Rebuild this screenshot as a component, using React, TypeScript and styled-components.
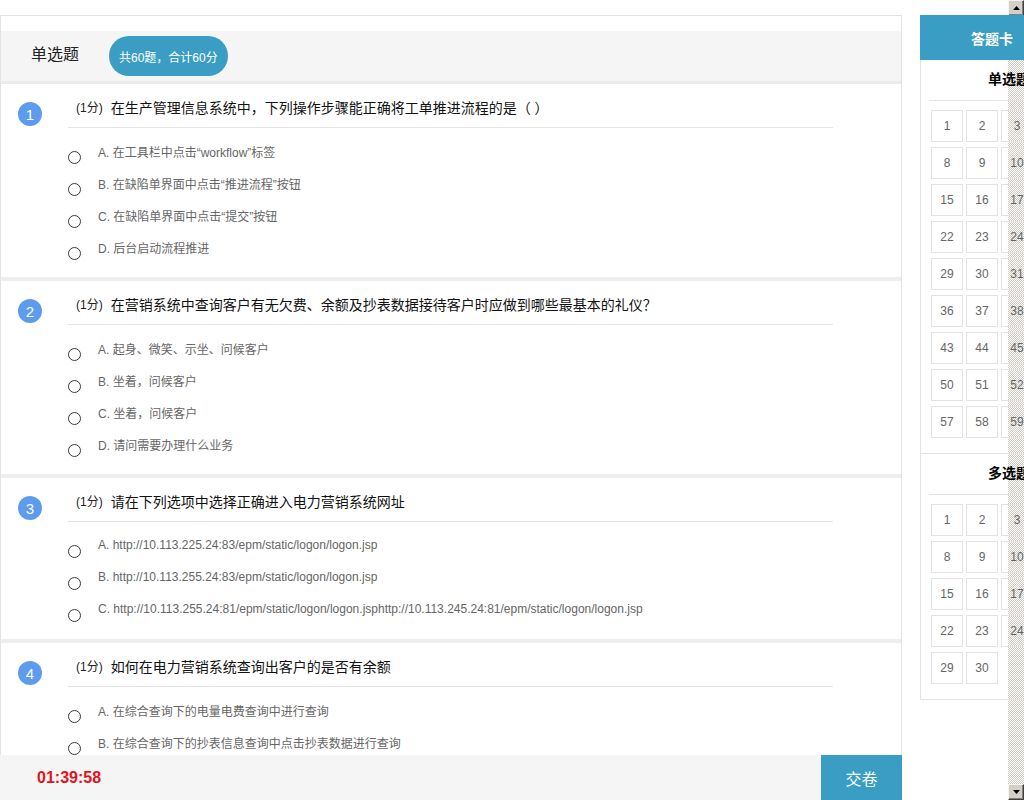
import React from "react";
import styled, { createGlobalStyle } from "styled-components";

const Global = createGlobalStyle`
  html, body { margin: 0; padding: 0; background: #fff; }
  body { font-family: "Liberation Sans", "Noto Sans CJK SC", sans-serif; }
  * { box-sizing: border-box; }
`;

const Screen = styled.div`
  width: 1024px;
  height: 800px;
  overflow: hidden;
  display: flex;
  background: #fff;
`;

const Viewport = styled.div`
  position: relative;
  width: 1008px;
  height: 800px;
  flex: none;
`;

const Page = styled.div`
  display: flex;
  align-items: flex-start;
  padding-top: 15px;
  gap: 18px;
  width: 1300px;
`;

const ExamPanel = styled.div`
  width: 902px;
  flex: none;
  border: 1px solid #e3e3e3;
  border-bottom: none;
  padding-top: 15px;
`;

const SectionHeader = styled.div`
  height: 53px;
  background: #f5f5f5;
  border-bottom: 3px solid #ebebeb;
  display: flex;
  align-items: center;
  padding-left: 30px;
  gap: 30px;
`;

const SectionName = styled.span`
  font-size: 16px;
  color: #222;
  margin-top: -6px;
`;

const Pill = styled.span`
  height: 40px;
  padding: 0 10px;
  border-radius: 20px;
  background: #3a9ec4;
  color: #fff;
  font-size: 12px;
  display: flex;
  align-items: center;
`;

const Question = styled.div`
  display: flex;
  padding: 0 0 14px 17px;
  border-bottom: 4px solid #eeeeee;
`;

const NumBadge = styled.div`
  width: 24px;
  height: 24px;
  margin-top: 18px;
  border-radius: 50%;
  background: #5d9cec;
  color: #fff;
  font-size: 15px;
  display: flex;
  align-items: center;
  justify-content: center;
  flex: none;
`;

const Body = styled.div`
  margin-left: 26px;
  width: 765px;
`;

const Title = styled.div`
  padding: 14px 0 9px 8px;
  border-bottom: 1px solid #e5e5e5;
  font-size: 14px;
  line-height: 20px;
  color: #111;
  display: flex;
  align-items: center;
  gap: 8px;
`;

const Score = styled.span`
  font-size: 12px;
  color: #222;
`;

const Options = styled.div`
  margin-top: 7px;
`;

const Option = styled.label`
  height: 32px;
  display: flex;
  align-items: center;
  font-size: 12px;
  color: #666;
`;

const Radio = styled.input.attrs({ type: "radio" })`
  appearance: none;
  width: 13px;
  height: 13px;
  margin: 13px 17px 0 0;
  border: 1px solid #3a3a3a;
  border-radius: 50%;
  background: #fff;
  flex: none;
`;

const CardPanel = styled.div`
  position: relative;
  z-index: 2;
  width: 265px;
  flex: none;
  border: 1px solid #e3e3e3;
`;

const CardHeader = styled.div`
  height: 45px;
  margin: -1px -1px 0 -1px;
  background: #3a9ec4;
  color: #fff;
  font-size: 14px;
  font-weight: bold;
  display: flex;
  align-items: center;
  padding-left: 51px;
`;

const CardSection = styled.div<{ $last?: boolean }>`
  padding-bottom: 15px;
  border-bottom: ${(p) => (p.$last ? "none" : "1px solid #e3e3e3")};
`;

const CardTitle = styled.div`
  height: 41px;
  margin: 0 8px;
  border-bottom: 1px solid #e3e3e3;
  display: flex;
  align-items: center;
  padding: 0 0 4px 59px;
  font-size: 14px;
  font-weight: bold;
  color: #000;
`;

const Grid = styled.div`
  display: grid;
  grid-template-columns: repeat(7, 32px);
  column-gap: 3px;
  row-gap: 5px;
  padding: 9px 0 0 10px;
`;

const Cell = styled.div`
  width: 32px;
  height: 32px;
  border: 1px solid #e3e3e3;
  display: flex;
  align-items: center;
  justify-content: center;
  font-size: 12px;
  color: #666;
`;

const BottomBar = styled.div`
  position: absolute;
  left: 0;
  bottom: 0;
  width: 902px;
  height: 45px;
  background: #f5f5f5;
  display: flex;
  align-items: center;
  justify-content: space-between;
`;

const Timer = styled.span`
  margin-left: 37px;
  color: #e0141e;
  font-size: 16px;
  font-weight: bold;
`;

const Submit = styled.button`
  width: 81px;
  height: 45px;
  border: none;
  background: #3a9ec4;
  color: #fff;
  font-size: 16px;
  font-family: inherit;
  padding: 0;
`;

const ScrollBar = styled.div`
  position: relative;
  z-index: 1;
  width: 16px;
  height: 800px;
  flex: none;
  display: flex;
  flex-direction: column;
  background: repeating-conic-gradient(#cfcbc3 0 25%, #ffffff 0 50%) 0 0 / 2px 2px;
`;

const Track = styled.div`
  flex: 1;
`;

const Arrow = styled.div`
  width: 16px;
  height: 16px;
  background: #d4d0c8;
  border-top: 1px solid #f4f3ef;
  border-left: 1px solid #f4f3ef;
  border-right: 1px solid #404040;
  border-bottom: 1px solid #404040;
  box-shadow: inset -1px -1px 0 #808080;
  display: flex;
  align-items: center;
  justify-content: center;
`;

type Q = { n: number; text: string; opts: string[] };

const questions: Q[] = [
  {
    n: 1,
    text: "在生产管理信息系统中，下列操作步骤能正确将工单推进流程的是（ ）",
    opts: [
      "A. 在工具栏中点击“workflow”标签",
      "B. 在缺陷单界面中点击“推进流程”按钮",
      "C. 在缺陷单界面中点击“提交”按钮",
      "D. 后台启动流程推进",
    ],
  },
  {
    n: 2,
    text: "在营销系统中查询客户有无欠费、余额及抄表数据接待客户时应做到哪些最基本的礼仪？",
    opts: ["A. 起身、微笑、示坐、问候客户", "B. 坐着，问候客户", "C. 坐着，问候客户", "D. 请问需要办理什么业务"],
  },
  {
    n: 3,
    text: "请在下列选项中选择正确进入电力营销系统网址",
    opts: [
      "A. http://10.113.225.24:83/epm/static/logon/logon.jsp",
      "B. http://10.113.255.24:83/epm/static/logon/logon.jsp",
      "C. http://10.113.255.24:81/epm/static/logon/logon.jsphttp://10.113.245.24:81/epm/static/logon/logon.jsp",
    ],
  },
  {
    n: 4,
    text: "如何在电力营销系统查询出客户的是否有余额",
    opts: ["A. 在综合查询下的电量电费查询中进行查询", "B. 在综合查询下的抄表信息查询中点击抄表数据进行查询", "C. 在客户查询中进行查询"],
  },
];

const range = (n: number) => Array.from({ length: n }, (_, i) => i + 1);

const Triangle = ({ up }: { up?: boolean }) => (
  <svg width="7" height="4" viewBox="0 0 7 4">
    <polygon points={up ? "3.5,0 7,4 0,4" : "0,0 7,0 3.5,4"} fill="#000" />
  </svg>
);

export default function App() {
  return (
    <Screen>
      <Global />
      <Viewport>
        <Page>
          <ExamPanel>
            <SectionHeader>
              <SectionName>单选题</SectionName>
              <Pill>共60题，合计60分</Pill>
            </SectionHeader>
            {questions.map((q) => (
              <Question key={q.n}>
                <NumBadge>{q.n}</NumBadge>
                <Body>
                  <Title>
                    <Score>(1分)</Score>
                    <span>{q.text}</span>
                  </Title>
                  <Options>
                    {q.opts.map((o) => (
                      <Option key={o}>
                        <Radio name={`q${q.n}`} />
                        <span>{o}</span>
                      </Option>
                    ))}
                  </Options>
                </Body>
              </Question>
            ))}
          </ExamPanel>
          <CardPanel>
            <CardHeader>答题卡</CardHeader>
            <CardSection>
              <CardTitle>单选题</CardTitle>
              <Grid>
                {range(60).map((i) => (
                  <Cell key={i}>{i}</Cell>
                ))}
              </Grid>
            </CardSection>
            <CardSection $last>
              <CardTitle>多选题</CardTitle>
              <Grid>
                {range(30).map((i) => (
                  <Cell key={i}>{i}</Cell>
                ))}
              </Grid>
            </CardSection>
          </CardPanel>
        </Page>
        <BottomBar>
          <Timer>01:39:58</Timer>
          <Submit>交卷</Submit>
        </BottomBar>
      </Viewport>
      <ScrollBar>
        <Arrow>
          <Triangle up />
        </Arrow>
        <Track />
        <Arrow>
          <Triangle />
        </Arrow>
      </ScrollBar>
    </Screen>
  );
}
